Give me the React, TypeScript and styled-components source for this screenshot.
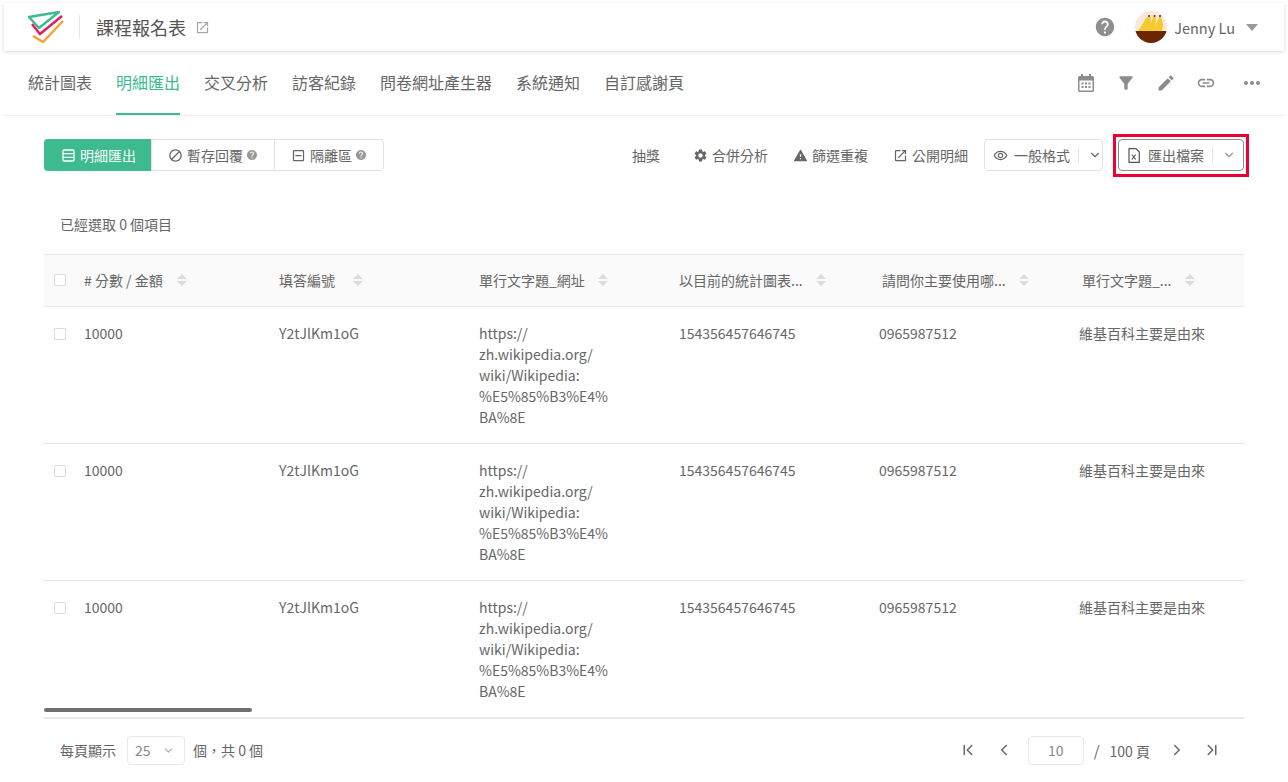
import styled, { createGlobalStyle } from "styled-components";
import { ChevronDown, ChevronFirst, ChevronLast, ChevronLeft, ChevronRight } from "lucide-react";
import {
  MdBlock,
  MdEdit,
  MdFilterAlt,
  MdHelp,
  MdLink,
  MdMoreHoriz,
  MdOutlineIndeterminateCheckBox,
  MdOutlineOpenInNew,
  MdOutlineRemoveRedEye,
  MdSettings,
  MdWarning,
} from "react-icons/md";

const tabs = ["統計圖表", "明細匯出", "交叉分析", "訪客紀錄", "問卷網址產生器", "系統通知", "自訂感謝頁"];
const headers = [
  { label: "# 分數 / 金額", indent: 0, sortGap: 14 },
  { label: "填答編號", indent: 0, sortGap: 18 },
  { label: "單行文字題_網址", indent: 0, sortGap: 13 },
  { label: "以目前的統計圖表...", indent: 0, sortGap: 13 },
  { label: "請問你主要使用哪...", indent: 3, sortGap: 13 },
  { label: "單行文字題_...", indent: 3, sortGap: 13 },
];
const urlLines = ["https://", "zh.wikipedia.org/", "wiki/Wikipedia:", "%E5%85%B3%E4%", "BA%8E"];

export default function App() {
  return (
    <Page>
      <GlobalStyle />
      <TopBar>
        <Brand>
          <Logo />
          <TitleDivider />
          <Title>課程報名表</Title>
          <MdOutlineOpenInNew size={15} color="#a6a6a6" />
        </Brand>
        <UserArea>
          <MdHelp size={22} color="#8f8f8f" />
          <Avatar />
          <UserName>Jenny Lu</UserName>
          <Caret />
        </UserArea>
      </TopBar>

      <TabBar>
        <TabList>
          {tabs.map((tab) => (
            <Tab key={tab} $active={tab === "明細匯出"}>
              {tab}
            </Tab>
          ))}
        </TabList>
        <TabTools>
          <CalendarIcon />
          <MdFilterAlt size={20} />
          <MdEdit size={20} />
          <MdLink size={20} />
          <MdMoreHoriz size={24} />
        </TabTools>
      </TabBar>

      <Toolbar>
        <Segments>
          <Segment $active>
            <RowsIcon />
            明細匯出
          </Segment>
          <Segment>
            <MdBlock size={15} />
            暫存回覆
            <SegmentHelp size={12} />
          </Segment>
          <Segment>
            <MdOutlineIndeterminateCheckBox size={15} />
            隔離區
            <SegmentHelp size={12} />
          </Segment>
        </Segments>
        <Controls>
          <Actions>
            <Action $lone>抽獎</Action>
            <Action>
              <MdSettings size={15} />
              合併分析
            </Action>
            <Action>
              <MdWarning size={15} />
              篩選重複
            </Action>
            <Action>
              <MdOutlineOpenInNew size={15} />
              公開明細
            </Action>
          </Actions>
          <SplitButton>
            <MdOutlineRemoveRedEye size={15} />
            <span>一般格式</span>
            <SplitDivider />
            <ChevronDown size={14} />
          </SplitButton>
          <ExportButton>
            <ExcelIcon />
            <span>匯出檔案</span>
            <SplitDivider />
            <ChevronDown size={14} color="#999" />
          </ExportButton>
        </Controls>
      </Toolbar>

      <SelectionInfo>已經選取 0 個項目</SelectionInfo>

      <TableWrap>
        <HeadRow>
          <CheckCell>
            <Checkbox />
          </CheckCell>
          {headers.map((header) => (
            <HeadCell key={header.label} $indent={header.indent}>
              {header.label}
              <SortIcon gap={header.sortGap} />
            </HeadCell>
          ))}
        </HeadRow>
        {[0, 1, 2].map((row) => (
          <BodyRow key={row}>
            <CheckCell>
              <Checkbox />
            </CheckCell>
            <Cell>10000</Cell>
            <Cell>Y2tJlKm1oG</Cell>
            <Cell>
              {urlLines.map((line) => (
                <div key={line}>{line}</div>
              ))}
            </Cell>
            <Cell>154356457646745</Cell>
            <Cell>0965987512</Cell>
            <Cell>維基百科主要是由來</Cell>
          </BodyRow>
        ))}
        <ScrollThumb />
      </TableWrap>

      <Footer>
        <PageSize>
          每頁顯示
          <SizeSelect>
            25
            <ChevronDown size={13} color="#aaa" />
          </SizeSelect>
          個，共 0 個
        </PageSize>
        <Pager>
          <PagerIcon $gap={18}>
            <ChevronFirst size={18} />
          </PagerIcon>
          <PagerIcon $gap={15}>
            <ChevronLeft size={18} />
          </PagerIcon>
          <PageInput>10</PageInput>
          <PageTotal>
            <Slash>/</Slash>100 頁
          </PageTotal>
          <PagerIcon $gap={17}>
            <ChevronRight size={18} />
          </PagerIcon>
          <PagerIcon $gap={0}>
            <ChevronLast size={18} />
          </PagerIcon>
        </Pager>
      </Footer>
    </Page>
  );
}

function Logo() {
  return (
    <svg width="36" height="33" viewBox="0 0 36 33" fill="none" strokeWidth="2.4">
      <path d="M1 6 31 1 11 17Z" stroke="#3dba8e" strokeLinejoin="round" />
      <path d="M4 13 12 23 34 5" stroke="#e5195f" />
      <path d="M5 25 15 31 35 10" stroke="#f7a030" />
    </svg>
  );
}

function Avatar() {
  return (
    <AvatarImage width="32" height="32" viewBox="0 0 32 32">
      <rect width="32" height="32" fill="#fde6da" />
      <path d="M3 20 12 6h4l-1 14ZM13 20 18 6h3l-1 14ZM18 20 24 6h2l2 8-1 6Z" fill="#f3cb2d" />
      <circle cx="14" cy="5" r="1" fill="#5c2a10" />
      <circle cx="19.500" cy="5" r="1" fill="#5c2a10" />
      <circle cx="25" cy="5" r="1" fill="#5c2a10" />
      <rect y="20" width="32" height="12" fill="#6b2500" />
    </AvatarImage>
  );
}

function CalendarIcon() {
  return (
    <svg width="16" height="18" viewBox="0 0 16 18" fill="#8c8c8c">
      <path d="M3 0h2v2h6V0h2v2h1.500A1.500 1.500 0 0 1 16 3.500v13a1.500 1.500 0 0 1-1.500 1.500h-13A1.500 1.500 0 0 1 0 16.500v-13A1.500 1.500 0 0 1 1.500 2H3Zm-1.500 6.500v10h13v-10Z" />
      <path d="M3.500 8.500h2v2h-2ZM7 8.500h2v2H7ZM10.500 8.500h2v2h-2ZM3.500 12h2v2h-2ZM7 12h2v2H7ZM10.500 12h2v2h-2Z" />
    </svg>
  );
}

function RowsIcon() {
  return (
    <svg width="15" height="15" viewBox="0 0 15 15" fill="none" stroke="#fff" strokeWidth="1.300">
      <rect x="2" y="2" width="11" height="11" rx="1" />
      <path d="M2 5.700h11M2 9.300h11" />
    </svg>
  );
}

function ExcelIcon() {
  return (
    <svg width="12" height="15" viewBox="0 0 12 15" fill="none" stroke="#555" strokeWidth="1.200">
      <path d="M1 .700h7l3.300 3.300v10.300H1Z" />
      <path d="M3.800 6.500l4 5M7.800 6.500l-4 5" />
    </svg>
  );
}

function SortIcon({ gap }: { gap: number }) {
  return (
    <SortGlyph $gap={gap} width="10" height="12" viewBox="0 0 10 12">
      <path d="M5 0 10 5H0ZM0 7h10l-5 5Z" fill="#dcdcdc" />
    </SortGlyph>
  );
}

const GlobalStyle = createGlobalStyle`
  html, body {
    margin: 0;
    background: #fff;
  }

  * {
    box-sizing: border-box;
  }
`;

const Page = styled.div`
  width: 1288px;
  height: 782px;
  padding-top: 3px;
  overflow: hidden;
  background: #fff;
  color: #666;
  font-family: "Noto Sans CJK TC", "Noto Sans", sans-serif;
  font-size: 14px;
`;

const TopBar = styled.header`
  display: flex;
  align-items: center;
  justify-content: space-between;
  height: 48px;
  margin: 0 4px;
  padding: 0 26px 0 24px;
  background: #fff;
  box-shadow: 0 1px 4px rgba(0, 0, 0, 0.14);
`;

const Brand = styled.div`
  display: flex;
  align-items: center;
`;

const TitleDivider = styled.div`
  width: 1px;
  height: 24px;
  margin: 0 16px 0 15px;
  background: #e5e5e5;
`;

const Title = styled.h1`
  margin: 0 9px 0 0;
  color: #555;
  font-size: 18px;
  font-weight: 400;
`;

const UserArea = styled.div`
  display: flex;
  align-items: center;
`;

const AvatarImage = styled.svg`
  margin: 0 7px 0 19px;
  border-radius: 50%;
`;

const UserName = styled.span`
  margin-right: 11px;
  color: #666;
  font-size: 14.500px;
`;

const Caret = styled.span`
  width: 0;
  height: 0;
  border-left: 6.500px solid transparent;
  border-right: 6.500px solid transparent;
  border-top: 7px solid #999;
`;

const TabBar = styled.nav`
  display: flex;
  align-items: center;
  justify-content: space-between;
  height: 65px;
  margin: 0 4px;
  padding: 0 20px 0 24px;
  border-bottom: 1px solid #ececec;
`;

const TabList = styled.div`
  display: flex;
  align-self: stretch;
  gap: 24px;
`;

const Tab = styled.div<{ $active?: boolean }>`
  display: flex;
  align-items: center;
  height: 64px;
  color: ${(props) => (props.$active ? "#3dba8e" : "#666")};
  font-size: 16px;
  border-bottom: 2px solid ${(props) => (props.$active ? "#3dba8e" : "transparent")};
`;

const TabTools = styled.div`
  display: flex;
  align-items: center;
  gap: 20px;
  color: #8c8c8c;

  svg:first-child {
    margin: 0 2px;
  }

  svg:last-child {
    margin-left: 4px;
  }
`;

const Toolbar = styled.div`
  display: flex;
  align-items: center;
  justify-content: space-between;
  margin: 23px 44px 0;
  height: 32px;
`;

const Segments = styled.div`
  display: flex;
  height: 32px;
  border: 1px solid #e2e2e2;
  border-radius: 4px;
`;

const Segment = styled.div<{ $active?: boolean }>`
  display: flex;
  align-items: center;
  gap: 4px;
  margin: -1px 0;
  padding: 0 16px;
  background: ${(props) => (props.$active ? "#3dba8e" : "transparent")};
  color: ${(props) => (props.$active ? "#fff" : "#666")};
  border-radius: ${(props) => (props.$active ? "4px 0 0 4px" : "0")};
  font-size: 14px;

  & + & {
    border-left: 1px solid #e2e2e2;
  }

  &:first-child {
    margin-left: -1px;
    padding: 0 15px 0 17px;
  }
`;

const SegmentHelp = styled(MdHelp)`
  margin-left: -1px;
  color: #999;
`;

const Controls = styled.div`
  display: flex;
  align-items: center;
  gap: 15px;
`;

const Actions = styled.div`
  display: flex;
  align-items: center;
  gap: 25px;
  margin-right: 1px;
`;

const Action = styled.div<{ $lone?: boolean }>`
  display: flex;
  align-items: center;
  gap: 4px;
  margin-right: ${(props) => (props.$lone ? "8px" : "0")};
  color: #666;
`;

const SplitButton = styled.div`
  display: flex;
  align-items: center;
  height: 32px;
  width: 119px;
  padding: 0 0 0 8px;
  border: 1px solid #e2e2e2;
  border-radius: 4px;
  white-space: nowrap;

  span:first-of-type {
    margin-left: 6px;
  }
`;

const SplitDivider = styled.i`
  width: 1px;
  height: 16px;
  margin: 0 9px 0 8px;
  background: #e5e5e5;
`;

const ExportButton = styled(SplitButton)`
  position: relative;
  width: 126px;
  padding: 0 0 0 9px;
  border-color: #8c8c8c;

  span:first-of-type {
    margin-left: 8px;
    color: #666;
  }

  &::after {
    content: "";
    position: absolute;
    inset: -6px -6px -7px;
    border: 3px solid #ec0033;
  }
`;

const SelectionInfo = styled.div`
  height: 83px;
  padding: 43px 0 0 60px;
  line-height: 20px;
  font-size: 14px;
`;

const TableWrap = styled.div`
  position: relative;
  margin: 0 44px;
  border-top: 1px solid #e8e8e8;
  border-bottom: 1px solid #e8e8e8;
  overflow: hidden;
`;

const CheckCell = styled.div`
  display: flex;
  padding: 5px 0 0 10px;
`;

const HeadRow = styled.div`
  display: grid;
  grid-template-columns: 40px 195px 200px 200px 200px 200px 165px;
  align-items: center;
  height: 52px;
  background: #fafafa;
  border-bottom: 1px solid #e8e8e8;

  ${CheckCell} {
    padding-top: 0;
    margin-top: -2px;
  }
`;

const BodyRow = styled.div`
  display: grid;
  grid-template-columns: 40px 195px 200px 200px 200px 200px 165px;
  align-items: start;
  height: 137px;
  padding-top: 16.400px;
  line-height: 20.800px;
  border-bottom: 1px solid #e8e8e8;

  &:last-of-type {
    border-bottom: none;
  }
`;

const Checkbox = styled.span`
  width: 12px;
  height: 12px;
  border: 1px solid #dcdcdc;
  border-radius: 1px;
  background: #fff;
`;

const HeadCell = styled.div<{ $indent: number }>`
  display: flex;
  align-items: center;
  margin-top: -2px;
  padding-left: ${(props) => props.$indent}px;
  white-space: nowrap;
`;

const SortGlyph = styled.svg<{ $gap: number }>`
  margin-left: ${(props) => props.$gap}px;
`;

const Cell = styled.div`
  white-space: nowrap;
`;

const ScrollThumb = styled.div`
  position: absolute;
  left: 0;
  bottom: 6px;
  width: 208px;
  height: 4px;
  border-radius: 2px;
  background: #6f6f6f;
`;

const Footer = styled.footer`
  display: flex;
  align-items: center;
  justify-content: space-between;
  height: 64px;
  margin: -1px 44px 0;
  padding: 0 23px 0 16px;
`;

const PageSize = styled.div`
  display: flex;
  align-items: center;
  gap: 8px;
  font-size: 14px;
`;

const SizeSelect = styled.div`
  display: flex;
  align-items: center;
  justify-content: space-between;
  width: 58px;
  height: 29px;
  margin: 0 0 0 3px;
  padding: 0 9px 0 7px;
  border: 1px solid #e8e8e8;
  border-radius: 4px;
  color: #888;
  font-size: 14px;
`;

const Pager = styled.div`
  display: flex;
  align-items: center;
`;

const PagerIcon = styled.span<{ $gap: number }>`
  display: flex;
  margin-right: ${(props) => props.$gap}px;
  color: #666;
`;

const PageInput = styled.div`
  display: flex;
  align-items: center;
  justify-content: center;
  width: 56px;
  height: 29px;
  border: 1px solid #e8e8e8;
  border-radius: 4px;
  color: #888;
`;

const PageTotal = styled.div`
  margin: 0 18px 0 10px;
`;

const Slash = styled.span`
  margin-right: 10px;
  font-size: 15px;
`;
